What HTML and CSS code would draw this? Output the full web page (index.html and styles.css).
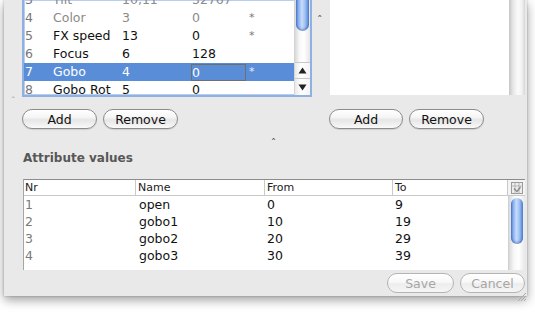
FILE: index.html
```html
<!DOCTYPE html>
<html>
<head>
<meta charset="utf-8">
<link rel="stylesheet" href="styles.css">
</head>
<body>
<div class="window">
  <div class="top">
    <div class="list">
      <div class="rows">
        <div class="row dim first"><span class="c nr">3</span><span class="c name">Tilt</span><span class="c ch">10,11</span><span class="c def">32767</span><span class="c flag"></span></div>
        <div class="row dim"><span class="c nr">4</span><span class="c name">Color</span><span class="c ch">3</span><span class="c def">0</span><span class="c flag">*</span></div>
        <div class="row"><span class="c nr">5</span><span class="c name">FX speed</span><span class="c ch">13</span><span class="c def">0</span><span class="c flag">*</span></div>
        <div class="row"><span class="c nr">6</span><span class="c name">Focus</span><span class="c ch">6</span><span class="c def">128</span><span class="c flag"></span></div>
        <div class="row sel"><span class="c nr">7</span><span class="c name">Gobo</span><span class="c ch">4</span><span class="c def"><span class="edit">0</span></span><span class="c flag">*</span></div>
        <div class="row"><span class="c nr">8</span><span class="c name">Gobo Rot</span><span class="c ch">5</span><span class="c def">0</span><span class="c flag"></span></div>
      </div>
      <div class="vscroll">
        <div class="vtrack"><div class="vthumb top-thumb"></div></div>
        <div class="arrow up"><svg width="9" height="7" viewBox="0 0 9 7"><path d="M4.5 0.5 L8.5 6.5 L0.5 6.5 Z" fill="#222"/></svg></div>
        <div class="arrow down"><svg width="9" height="7" viewBox="0 0 9 7"><path d="M0.5 0.5 L8.5 0.5 L4.5 6.5 Z" fill="#222"/></svg></div>
      </div>
    </div>
    <div class="gutter"><span class="caret">&#710;</span></div>
    <div class="pane">
      <div class="pane-white"></div>
      <div class="pane-track"></div>
    </div>
  </div>
  <div class="split-left"><span class="caret small">&#710;</span></div>
  <div class="btnrow">
    <div class="group left">
      <button class="btn">Add</button>
      <button class="btn">Remove</button>
    </div>
    <div class="group right">
      <button class="btn">Add</button>
      <button class="btn">Remove</button>
    </div>
  </div>
  <div class="split-mid"><span class="caret">&#710;</span></div>
  <div class="heading">Attribute values</div>
  <div class="grid">
    <div class="ghead">
      <span class="g nr">Nr</span><span class="g name">Name</span><span class="g from">From</span><span class="g to">To</span>
      <span class="corner"><svg width="12" height="12" viewBox="0 0 12 12"><rect x="0.5" y="0.5" width="11" height="11" fill="#eeeeee" stroke="#9a9a9a"/><path d="M0.5 4 H11.5 M4 0.5 V11.5 M8 0.5 V11.5" stroke="#b5b5b5"/><path d="M3 6.5 L6 9.5 L9.5 5" stroke="#888" stroke-width="1.3" fill="none"/></svg></span>
    </div>
    <div class="gbody">
      <div class="grows">
        <div class="grow"><span class="g nr">1</span><span class="g name">open</span><span class="g from">0</span><span class="g to">9</span></div>
        <div class="grow"><span class="g nr">2</span><span class="g name">gobo1</span><span class="g from">10</span><span class="g to">19</span></div>
        <div class="grow"><span class="g nr">3</span><span class="g name">gobo2</span><span class="g from">20</span><span class="g to">29</span></div>
        <div class="grow"><span class="g nr">4</span><span class="g name">gobo3</span><span class="g from">30</span><span class="g to">39</span></div>
      </div>
      <div class="gscroll"><div class="vthumb bottom-thumb"></div></div>
    </div>
  </div>
  <div class="footer">
    <button class="btn off save">Save</button>
    <button class="btn off cancel">Cancel</button>
    <span class="grip"><svg width="10" height="10" viewBox="0 0 10 10"><path d="M9 1 L1 9 M9 4 L4 9 M9 7 L7 9" stroke="#a8a8a8" stroke-width="1"/></svg></span>
  </div>
</div>
</body>
</html>
```
FILE: styles.css
```css
html, body {
  margin: 0;
  padding: 0;
  background: #ffffff;
}
body {
  width: 535px;
  height: 313px;
  overflow: hidden;
  font-family: "DejaVu Sans", sans-serif;
}
.window {
  margin-left: 4px;
  width: 523px;
  height: 296px;
  background: #e9e9e9;
  box-shadow: 0 4px 10px rgba(0, 0, 0, 0.38), 0 0 2px rgba(0, 0, 0, 0.25);
  position: relative;
  box-sizing: border-box;
  padding-left: 18px;
}
.top {
  display: flex;
  height: 97px;
}
.list {
  width: 290px;
  height: 97px;
  box-sizing: border-box;
  border: 2px solid #8fb0e2;
  border-top: none;
  box-shadow: inset 0 0 0 1px #b9cdee;
  background: #fff;
  display: flex;
  overflow: hidden;
}
.rows {
  width: 270px;
  overflow: hidden;
}
.row {
  display: flex;
  height: 18px;
  line-height: 18px;
  font-size: 12.5px;
  color: #111;
  white-space: nowrap;
}
.row.first {
  margin-top: -9px;
}
.row.dim {
  color: #8a8a8a;
}
.row.sel {
  background: #5a8dd8;
  color: #fff;
}
.c {
  display: block;
  box-sizing: border-box;
  padding-left: 1px;
}
.c.nr { width: 28px; color: #777; }
.row.sel .c.nr { color: #fff; }
.c.name { width: 69px; }
.c.ch { width: 70px; }
.c.def { width: 57px; }
.c.flag { width: 40px; font-size: 11px; color: #777; }
.row.sel .c.flag { color: #e8eefc; }
.edit {
  display: block;
  width: 55px;
  height: 17px;
  line-height: 15px;
  margin-top: 1px;
  box-sizing: border-box;
  border: 1px solid #6f6f6f;
  margin-left: -1px;
}
.vscroll {
  width: 16px;
  display: flex;
  flex-direction: column;
  border-left: 1px solid #d4d4d4;
  box-sizing: border-box;
  background: linear-gradient(90deg, #d8d8d8, #f8f8f8 30%, #ffffff 60%, #e6e6e6);
}
.vtrack {
  height: 62px;
  position: relative;
}
.vthumb {
  border-radius: 0 0 7px 7px;
  background: linear-gradient(90deg, #4a7ad0 0%, #86aef0 18%, #c9dcfa 45%, #9ec0f2 70%, #4f80d4 100%);
  box-shadow: inset 0 -2px 2px rgba(30, 60, 140, 0.35);
}
.top-thumb {
  height: 31px;
  margin: 0 1px;
}
.arrow {
  height: 16px;
  display: flex;
  align-items: center;
  justify-content: center;
  background: linear-gradient(90deg, #e9e9e9, #ffffff 40%, #f4f4f4);
}
.arrow.up {
  border-top: 1px solid #c8c8c8;
  border-bottom: 1px solid #c8c8c8;
  height: 15px;
}
.gutter {
  width: 18px;
  position: relative;
}
.caret {
  font-size: 11px;
  color: #555;
  line-height: 10px;
  display: block;
}
.gutter .caret {
  margin-top: 16px;
  margin-left: 5px;
}
.pane {
  width: 195px;
  height: 95px;
  display: flex;
}
.pane-white {
  flex: 1;
  background: #fff;
}
.pane-track {
  width: 16px;
  background: linear-gradient(90deg, #c6c6c6, #e6e6e6 25%, #fbfbfb 55%, #f2f2f2 80%, #d6d6d6);
}
.split-left {
  height: 12px;
  margin-left: -11px;
}
.split-left .caret {
  font-size: 9px;
  color: #999;
  line-height: 8px;
  padding-top: 0px;
}
.btnrow {
  display: flex;
  height: 20px;
}
.group {
  display: flex;
  gap: 6px;
}
.group.left {
  width: 307px;
}
.btn {
  height: 20px;
  width: 75px;
  box-sizing: border-box;
  border: 1px solid #8c8c8c;
  border-radius: 10px;
  background: linear-gradient(#ffffff, #f6f6f6 40%, #e6e6e6 55%, #f2f2f2 85%, #fafafa);
  box-shadow: 0 1px 1px rgba(0, 0, 0, 0.12);
  font-family: "DejaVu Sans", sans-serif;
  font-size: 12.5px;
  color: #111;
  padding: 0;
  line-height: 17px;
}
.group.right .btn:first-child {
  width: 74px;
}
.split-mid {
  height: 18px;
  display: flex;
  justify-content: center;
  margin-right: 2px;
}
.split-mid .caret {
  margin-top: 10px;
}
.heading {
  font-weight: bold;
  font-size: 12px;
  color: #575757;
  height: 32px;
  line-height: 22px;
  padding-left: 1px;
}
.grid {
  width: 502px;
  margin-left: 1px;
  height: 91px;
  box-sizing: border-box;
  border: 1px solid #a6a6a6;
  border-top-color: #8c8c8c;
  border-bottom: none;
  border-right: none;
  background: #fff;
  overflow: hidden;
}
.ghead {
  display: flex;
  height: 16px;
  line-height: 15px;
  font-size: 11px;
  color: #222;
  border-bottom: 1px solid #c9c9c9;
  box-sizing: border-box;
}
.g {
  display: block;
  box-sizing: border-box;
  padding-left: 2px;
  white-space: nowrap;
}
.g.nr { width: 112px; }
.g.name { width: 129px; }
.g.from { width: 128px; }
.g.to { width: 115px; }
.ghead .g {
  border-right: 1px solid #c9c9c9;
}
.ghead .g.nr { padding-left: 1px; }
.corner {
  width: 17px;
  display: flex;
  align-items: center;
  justify-content: center;
  background: #f4f4f4;
}
.gbody {
  display: flex;
  height: 74px;
}
.grows {
  width: 484px;
}
.grow {
  display: flex;
  height: 17px;
  line-height: 17px;
  font-size: 12.5px;
  color: #111;
}
.grow .g.nr {
  color: #7a7a7a;
  padding-left: 1px;
}
.grow .g.name { padding-left: 3px; }
.gscroll {
  width: 17px;
  padding-top: 2px;
  box-sizing: border-box;
  background: linear-gradient(90deg, #d9d9d9, #f7f7f7 30%, #ffffff 60%, #e8e8e8);
  border-left: 1px solid #d0d0d0;
}
.bottom-thumb {
  height: 46px;
  margin: 0 2px;
  border-radius: 7px;
}
.footer {
  display: flex;
  justify-content: flex-end;
  gap: 6px;
  padding-top: 3px;
  padding-right: 2px;
  position: relative;
}
.btn.off {
  border-color: #b4b4b4;
  color: #a6a6a6;
  box-shadow: none;
  background: linear-gradient(#ffffff, #f8f8f8 45%, #ededed 55%, #f6f6f6);
}
.btn.save { width: 67px; }
.btn.cancel { width: 65px; }
.grip {
  position: absolute;
  right: 0px;
  bottom: -4px;
  width: 10px;
  height: 10px;
}
```
